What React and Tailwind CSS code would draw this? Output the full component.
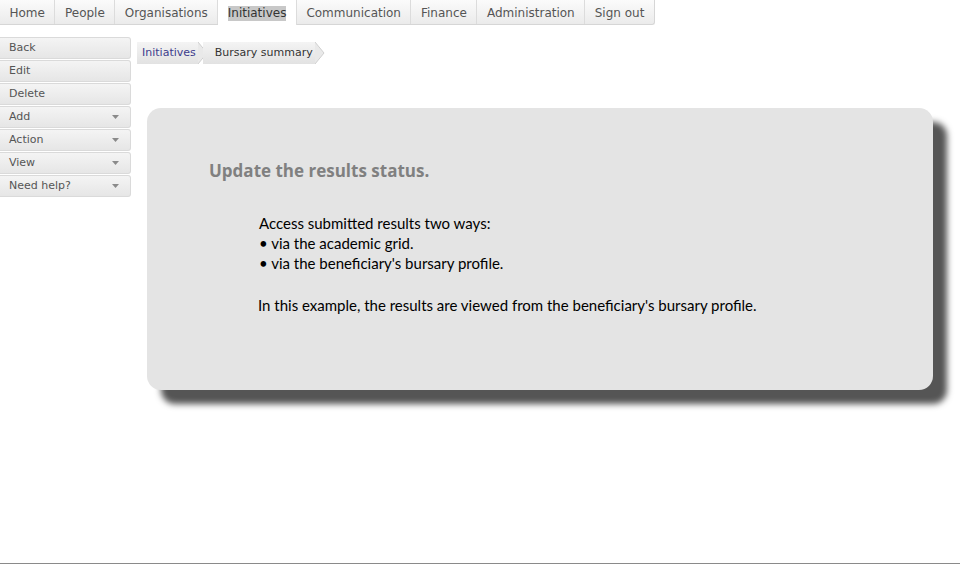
import React from 'react';

const tabs = ['Home', 'People', 'Organisations', 'Initiatives', 'Communication', 'Finance', 'Administration', 'Sign out'];

const sideButtons = [
  { label: 'Back' },
  { label: 'Edit' },
  { label: 'Delete' },
  { label: 'Add', menu: true },
  { label: 'Action', menu: true },
  { label: 'View', menu: true },
  { label: 'Need help?', menu: true },
];

function Caret() {
  return (
    <svg width="7" height="4" viewBox="0 0 7 4" className="ml-auto mr-[11px]">
      <path d="M0 0h7L3.5 4z" fill="#8a8a8a" />
    </svg>
  );
}

function Crumb({ children, first, color }) {
  return (
    <div className="relative flex h-[22px] items-center bg-gradient-to-b from-[#f4f4f4] to-[#e2e2e2]">
      <span className={`${first ? 'pl-[5px]' : 'pl-[12px]'} pr-[2px] ${color}`}>{children}</span>
      <svg width="10" height="22" viewBox="0 0 10 22" className="absolute right-[-10px] top-0">
        <path d="M0 0L9 11L0 22z" fill="#e9e9e9" />
        <path d="M0 0L9 11L0 22" fill="none" stroke="#cfcfcf" strokeWidth="1" />
      </svg>
    </div>
  );
}

export default function App() {
  return (
    <div className="flex h-[564px] flex-col border-b border-[#8a8a8a] bg-white font-['DejaVu_Sans',sans-serif]">
      <div className="flex">
        <div className="flex h-[25px] rounded-br-[3px] border-b border-r border-[#d6d6d6] bg-gradient-to-b from-[#fbfbfb] to-[#ebebeb] text-[12px] text-[#555]">
          {tabs.map((t) => (
            t === 'Initiatives' ? (
              <div key={t} className="mb-[-1px] flex items-center border-r border-[#dcdcdc] bg-white px-[9.5px] pt-[1px]">
                <span className="bg-[#c8c8c8] leading-[15px] text-[#333]">{t}</span>
              </div>
            ) : (
              <div key={t} className="flex items-center border-r border-[#dcdcdc] px-[9.5px] pt-[1px] last:border-r-0">
                {t}
              </div>
            )
          ))}
        </div>
      </div>

      <div className="flex flex-1">
        <div className="mt-[12px] flex w-[131px] flex-col gap-[1px]">
          {sideButtons.map((b) => (
            <div
              key={b.label}
              className="flex h-[22px] items-center rounded-r-[3px] border border-l-0 border-[#dadada] bg-gradient-to-b from-[#f4f4f4] to-[#e6e6e6] pl-[9px] text-[11px] text-[#555]"
            >
              {b.label}
              {b.menu && <Caret />}
            </div>
          ))}
        </div>

        <div className="ml-[6px] flex flex-1 flex-col">
          <div className="mt-[17px] flex text-[11px]">
            <Crumb first color="text-[#3c3c8c]">Initiatives</Crumb>
            <div className="w-[5px]" />
            <Crumb color="text-[#333]">Bursary summary</Crumb>
          </div>

          <div className="ml-[10px] mt-[44px] h-[282px] w-[786px] rounded-[14px] bg-[#e4e4e4] pl-[62px] pt-[50px] shadow-[14px_14px_6px_#555]">
            <h2 className="font-['Open_Sans',sans-serif] text-[17px] font-bold text-[#808080]">Update the results status.</h2>
            <div className="ml-[50px] mt-[29px] font-['Lato',sans-serif] text-[15px] leading-[20px] text-black">
              <p>Access submitted results two ways:</p>
              <p>• via the academic grid.</p>
              <p>• via the beneficiary's bursary profile.</p>
              <p className="ml-[-1px] mt-[22px]">In this example, the results are viewed from the beneficiary's bursary profile.</p>
            </div>
          </div>
        </div>
      </div>
    </div>
  );
}
